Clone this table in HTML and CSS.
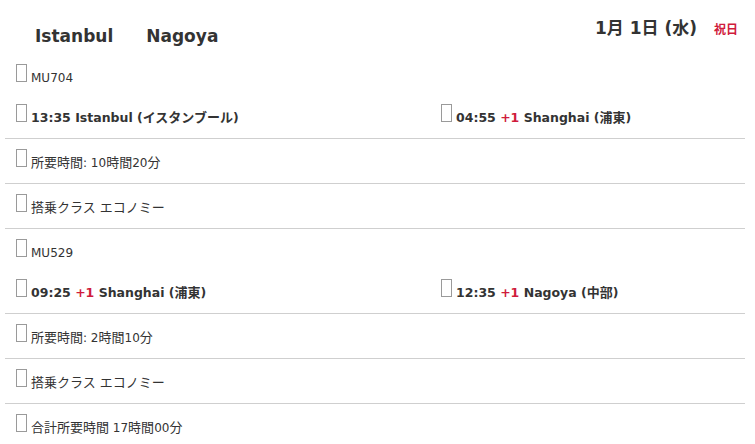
FILE: index.html
```html
<!DOCTYPE html>
<html lang="ja">
<head>
<meta charset="utf-8">
<title>Istanbul - Nagoya</title>
<link rel="stylesheet" href="styles.css">
</head>
<body>
<div class="page">
  <header class="head">
    <h1 class="cities"><span>Istanbul</span><span>Nagoya</span></h1>
    <div class="date">1月 1日 (水)<span class="holiday">祝日</span></div>
  </header>

  <div class="row flight"><span class="cell"><span class="ico"></span>MU704</span></div>
  <div class="row line two">
    <span class="cell bold"><span class="ico"></span>13:35 Istanbul (<span class="jp">イスタンブール</span>)</span>
    <span class="cell bold"><span class="ico"></span>04:55 <span class="plus">+1</span> Shanghai (<span class="jp">浦東</span>)</span>
  </div>
  <div class="row line"><span class="cell"><span class="ico"></span><span class="jp">所要時間</span>: 10<span class="jp">時間</span>20<span class="jp">分</span></span></div>
  <div class="row line"><span class="cell"><span class="ico"></span><span class="jp">搭乗クラス エコノミー</span></span></div>

  <div class="row flight"><span class="cell"><span class="ico"></span>MU529</span></div>
  <div class="row line two">
    <span class="cell bold"><span class="ico"></span>09:25 <span class="plus">+1</span> Shanghai (<span class="jp">浦東</span>)</span>
    <span class="cell bold"><span class="ico"></span>12:35 <span class="plus">+1</span> Nagoya (<span class="jp">中部</span>)</span>
  </div>
  <div class="row line"><span class="cell"><span class="ico"></span><span class="jp">所要時間</span>: 2<span class="jp">時間</span>10<span class="jp">分</span></span></div>
  <div class="row line"><span class="cell"><span class="ico"></span><span class="jp">搭乗クラス エコノミー</span></span></div>
  <div class="row flight"><span class="cell"><span class="ico"></span><span class="jp">合計所要時間</span> 17<span class="jp">時間</span>00<span class="jp">分</span></span></div>
</div>
</body>
</html>
```
FILE: styles.css
```css
html, body {
  margin: 0;
  padding: 0;
  background: #fff;
}
body {
  font-family: "DejaVu Sans", "Noto Sans CJK JP", sans-serif;
  color: #333;
  font-size: 12px;
}
.page {
  margin: 0 10px 0 5px;
}
.head {
  height: 54px;
  display: flex;
  justify-content: space-between;
  align-items: flex-start;
}
.cities {
  margin: 0;
  padding: 26px 0 0 30px;
  font-size: 17px;
  line-height: 20px;
  font-weight: bold;
  display: flex;
  gap: 33px;
}
.date {
  padding: 18px 7px 0 0;
  font-size: 17px;
  line-height: 20px;
  font-weight: bold;
}
.holiday {
  font-size: 12px;
  color: #d01c3c;
  margin-left: 17px;
}
.row {
  box-sizing: border-box;
  padding: 10px 0 0 11px;
}
.flight {
  height: 40px;
}
.line {
  height: 45px;
  border-bottom: 1px solid #cfcfcf;
}
.two {
  display: grid;
  grid-template-columns: 425px 1fr;
}
.cell {
  display: block;
  line-height: 18px;
  font-size: 12px;
  white-space: nowrap;
}
.bold {
  font-weight: bold;
  font-size: 12.5px;
}
.jp {
  font-size: 13px;
}
.ico {
  display: inline-block;
  box-sizing: border-box;
  width: 11px;
  height: 18px;
  border: 1px solid #9a9a9a;
  margin-right: 4px;
  vertical-align: baseline;
}
.plus {
  color: #d01c3c;
}
```
